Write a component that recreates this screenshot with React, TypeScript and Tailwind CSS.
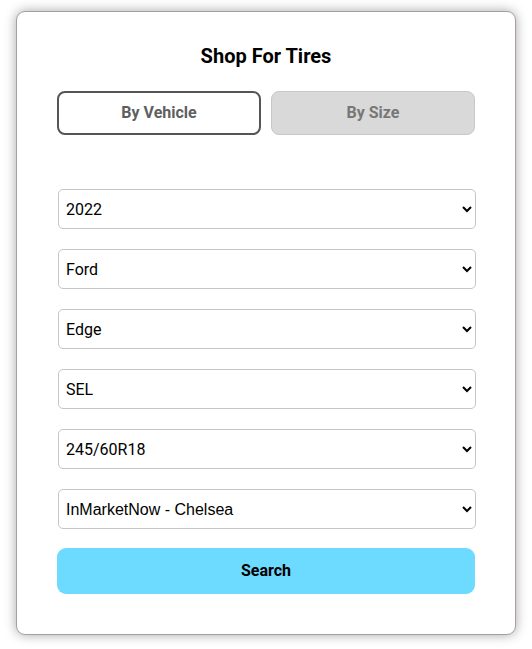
import { useState } from 'react';

const FIELDS = [
  { value: '2022', options: ['2022', '2021', '2020'], font: 'font-["Roboto",sans-serif]' },
  { value: 'Ford', options: ['Ford', 'Chevrolet', 'Toyota'], font: 'font-["Roboto",sans-serif]' },
  { value: 'Edge', options: ['Edge', 'Escape', 'Explorer'], font: 'font-["Roboto",sans-serif]' },
  { value: 'SEL', options: ['SEL', 'SE', 'ST'], font: 'font-["Roboto",sans-serif]' },
  { value: '245/60R18', options: ['245/60R18', '255/55R20'], font: 'font-["Roboto",sans-serif]' },
  { value: 'InMarketNow - Chelsea', options: ['InMarketNow - Chelsea'], font: 'font-["Liberation_Sans",Arial,sans-serif]' },
];

export default function App() {
  const [tab, setTab] = useState<'vehicle' | 'size'>('vehicle');

  return (
    <div className="min-h-screen bg-white pt-[11px] pl-[16px] font-['Roboto',sans-serif]">
      <div className="w-[500px] h-[624px] rounded-[9px] border border-[#a89ea0] bg-white shadow-[0_0_12px_rgba(0,0,0,0.35)] px-[40px] pt-[30px]">
        <h1 className="text-center text-[20px] leading-[28px] font-bold text-black">Shop For Tires</h1>

        <div className="mt-[21px] grid grid-cols-2 gap-[10px]">
          <button
            onClick={() => setTab('vehicle')}
            className={
              tab === 'vehicle'
                ? 'h-[44px] rounded-[8px] border-2 border-[#555] bg-white text-[16px] font-bold text-[#5f5f5f]'
                : 'h-[44px] rounded-[8px] border border-[#c8c8c8] bg-[#d9d9d9] text-[16px] font-bold text-[#777]'
            }
          >
            By Vehicle
          </button>
          <button
            onClick={() => setTab('size')}
            className={
              tab === 'size'
                ? 'h-[44px] rounded-[8px] border-2 border-[#555] bg-white text-[16px] font-bold text-[#5f5f5f]'
                : 'h-[44px] rounded-[8px] border border-[#c8c8c8] bg-[#d9d9d9] text-[16px] font-bold text-[#777]'
            }
          >
            By Size
          </button>
        </div>

        <div className="mt-[54px] flex flex-col gap-[20px] pl-[1px] -mr-[1px]">
          {FIELDS.map(f => (
            <select
              key={f.value}
              defaultValue={f.value}
              className={`h-[40px] w-full rounded-[5px] border border-[#c6c6c6] bg-white pl-[3px] pr-[2px] text-[16px] text-black ${f.font}`}
            >
              {f.options.map(o => <option key={o} value={o}>{o}</option>)}
            </select>
          ))}
        </div>

        <button className="mt-[19px] h-[46px] w-full rounded-[9px] bg-[#6ddaff] text-[16px] font-bold text-black">
          Search
        </button>
      </div>
    </div>
  );
}
